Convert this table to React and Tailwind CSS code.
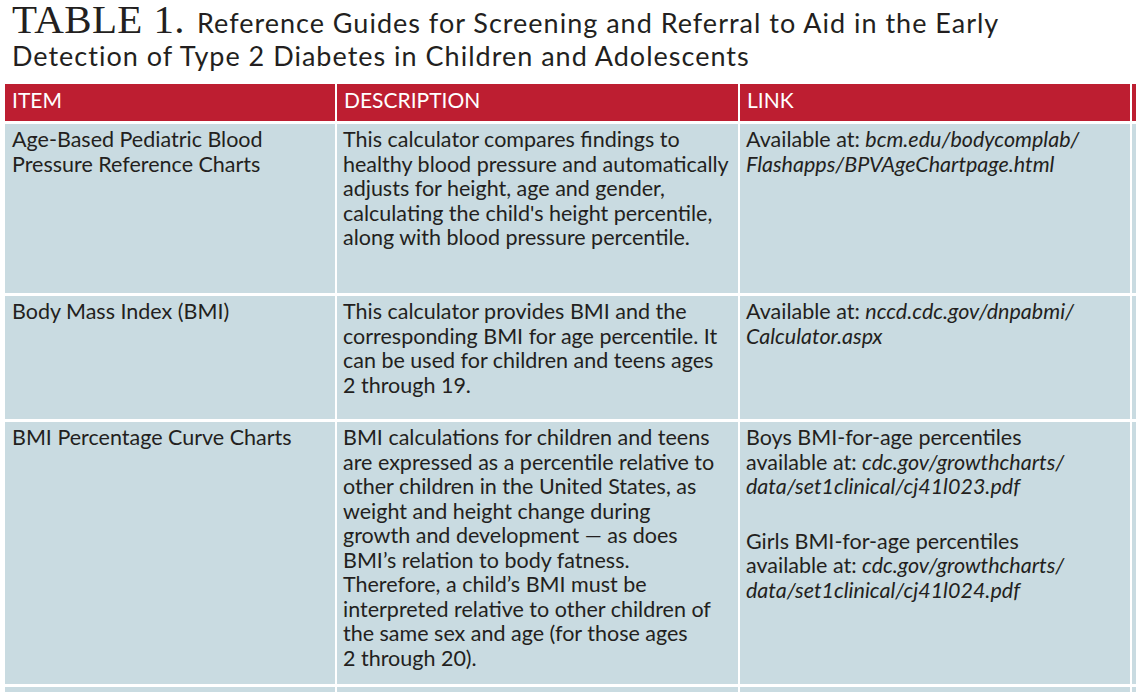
const rows = [
  {
    h: 'h-[169px]',
    item: ['Age-Based Pediatric Blood', 'Pressure Reference Charts'],
    desc: [
      'This calculator compares findings to',
      'healthy blood pressure and automatically',
      'adjusts for height, age and gender,',
      "calculating the child's height percentile,",
      'along with blood pressure percentile.',
    ],
    link: [
      [
        ['Available at: ', <i key="a">bcm.edu/bodycomplab/</i>],
        [<i key="b">Flashapps/BPVAgeChartpage.html</i>],
      ],
    ],
  },
  {
    h: 'h-[123px]',
    item: ['Body Mass Index (BMI)'],
    desc: [
      'This calculator provides BMI and the',
      'corresponding BMI for age percentile. It',
      'can be used for children and teens ages',
      '2 through 19.',
    ],
    link: [
      [
        ['Available at: ', <i key="a">nccd.cdc.gov/dnpabmi/</i>],
        [<i key="b">Calculator.aspx</i>],
      ],
    ],
  },
  {
    h: 'h-[262px]',
    item: ['BMI Percentage Curve Charts'],
    desc: [
      'BMI calculations for children and teens',
      'are expressed as a percentile relative to',
      'other children in the United States, as',
      'weight and height change during',
      'growth and development — as does',
      'BMI’s relation to body fatness.',
      'Therefore, a child’s BMI must be',
      'interpreted relative to other children of',
      'the same sex and age (for those ages',
      '2 through 20).',
    ],
    link: [
      [
        ['Boys BMI-for-age percentiles'],
        ['available at: ', <i key="a">cdc.gov/growthcharts/</i>],
        [<i key="b">data/set1clinical/cj41l023.pdf</i>],
      ],
      [
        ['Girls BMI-for-age percentiles'],
        ['available at: ', <i key="a">cdc.gov/growthcharts/</i>],
        [<i key="b">data/set1clinical/cj41l024.pdf</i>],
      ],
    ],
  },
];

function Lines({ lines }) {
  return lines.map((l, i) => (
    <div key={i} className="whitespace-nowrap">
      {l}
    </div>
  ));
}

export default function App() {
  return (
    <div className="w-[1136px] h-[692px] overflow-hidden bg-white text-[#231f20] font-['Lato',sans-serif]">
      {/* title */}
      <div className="pl-[12px] pt-[6px] text-[27px] leading-[33px] tracking-[1px] whitespace-nowrap">
        <div>
          <span className="font-['Liberation_Serif',serif] text-[41px] leading-[20px] tracking-[0.4px] mr-[12px]">
            TABLE 1.
          </span>
          Reference Guides for Screening and Referral to Aid in the Early
        </div>
        <div>Detection of Type 2 Diabetes in Children and Adolescents</div>
      </div>

      {/* table */}
      <div className="mt-[12px] ml-[5px] grid grid-cols-[330px_401px_390px_1fr] gap-x-[2px] gap-y-[3px] text-[21.5px] leading-[24.5px]">
        {['ITEM', 'DESCRIPTION', 'LINK', ''].map((t, i) => (
          <div
            key={i}
            className="h-[37px] bg-[#bd1e31] px-[7px] text-white text-[21px] leading-[31px]"
          >
            {t}
          </div>
        ))}

        {rows.map((r, i) => (
          <div key={i} className="contents">
            <div className={`${r.h} bg-[#c9dbe1] pl-[7px] pt-[3px]`}>
              <Lines lines={r.item} />
            </div>
            <div className={`${r.h} bg-[#c9dbe1] pl-[6px] pt-[3px]`}>
              <Lines lines={r.desc} />
            </div>
            <div className={`${r.h} bg-[#c9dbe1] pl-[6px] pt-[3px] flex flex-col gap-[30px]`}>
              {r.link.map((p, j) => (
                <div key={j}>
                  <Lines lines={p} />
                </div>
              ))}
            </div>
            <div className={`${r.h} bg-[#c9dbe1]`} />
          </div>
        ))}

        {[0, 1, 2, 3].map((i) => (
          <div key={`e${i}`} className="h-[20px] bg-[#c9dbe1]" />
        ))}
      </div>
    </div>
  );
}
